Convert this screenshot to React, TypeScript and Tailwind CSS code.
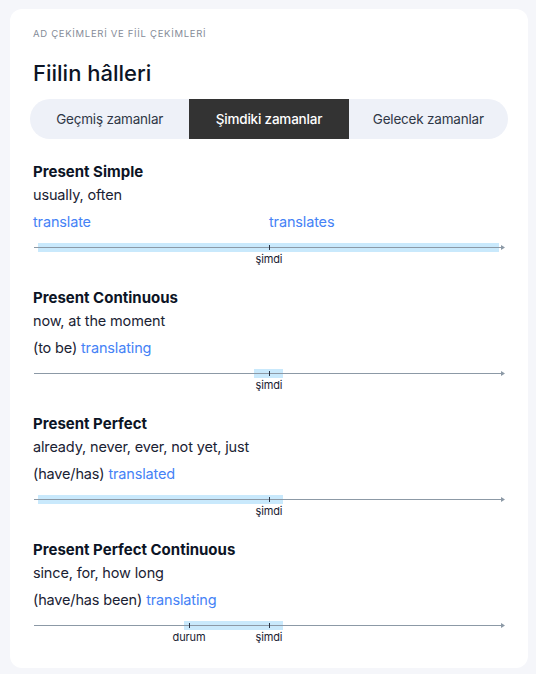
import React from "react";

type Mark = { label: string; pos: string };
type Tense = {
  title: string;
  hint: string;
  prefix?: string;
  forms: { text: string; left?: boolean }[];
  band: string;
  marks: Mark[];
};

const tenses: Tense[] = [
  {
    title: "Present Simple",
    hint: "usually, often",
    forms: [{ text: "translate" }, { text: "translates" }],
    band: "left-[4px] right-[6px]",
    marks: [{ label: "şimdi", pos: "left-[235px]" }],
  },
  {
    title: "Present Continuous",
    hint: "now, at the moment",
    prefix: "(to be)",
    forms: [{ text: "translating" }],
    band: "left-[220px] w-[29px]",
    marks: [{ label: "şimdi", pos: "left-[235px]" }],
  },
  {
    title: "Present Perfect",
    hint: "already, never, ever, not yet, just",
    prefix: "(have/has)",
    forms: [{ text: "translated" }],
    band: "left-[4px] w-[245px]",
    marks: [{ label: "şimdi", pos: "left-[235px]" }],
  },
  {
    title: "Present Perfect Continuous",
    hint: "since, for, how long",
    prefix: "(have/has been)",
    forms: [{ text: "translating" }],
    band: "left-[150px] w-[99px]",
    marks: [
      { label: "durum", pos: "left-[155px]" },
      { label: "şimdi", pos: "left-[235px]" },
    ],
  },
];

const tabs = ["Geçmiş zamanlar", "Şimdiki zamanlar", "Gelecek zamanlar"];

const Timeline = ({ t }: { t: Tense }) => (
  <div className="relative ml-[1px] mr-[3px] h-[52px]">
    {/* highlighted span */}
    <div className={`absolute top-[9px] h-[9px] bg-[#c9e9fc] ${t.band}`} />
    {/* axis */}
    <div className="absolute left-0 right-[2px] top-[13px] h-px bg-[#8c99a6]" />
    <svg className="absolute right-0 top-[11px]" width="4" height="5" viewBox="0 0 4 5">
      <path d="M0 0 L4 2.5 L0 5 Z" fill="#8c99a6" />
    </svg>
    {t.marks.map((m) => (
      <div key={m.label} className={`absolute top-0 ${m.pos}`}>
        <div className="absolute left-0 top-[11px] h-[5px] w-px bg-[#2b3545]" />
        <div className="absolute top-[18px] -translate-x-1/2 text-[11px] leading-[14px] text-[#1a2233] whitespace-nowrap">
          {m.label}
        </div>
      </div>
    ))}
  </div>
);

export default function App() {
  return (
    <div
      className="min-h-screen bg-[#f5f6fa] pl-[10px] pr-[8px] pt-[9px] pb-[8px]"
      style={{ fontFamily: "Inter, 'Open Sans', sans-serif" }}
    >
      <div className="rounded-[12px] bg-white px-[20px] pt-[18px] pb-[4px]">
        <div className="pl-[3px] text-[9.5px] leading-[14px] tracking-[0.7px] text-[#858b98] uppercase">
          AD ÇEKİMLERİ VE FİİL ÇEKİMLERİ
        </div>
        <h1 className="mt-[18px] pl-[3px] text-[22px] leading-[28px] font-medium text-[#0c1425]">
          Fiilin hâlleri
        </h1>
        <div className="mt-[12px] grid h-[40px] grid-cols-3 overflow-hidden rounded-full bg-[#eef1f8] text-[13.5px] tracking-[-0.2px]">
          {tabs.map((tab, i) => (
            <div
              key={tab}
              className={
                i === 1
                  ? "flex items-center justify-center bg-[#333333] font-medium text-white"
                  : "flex items-center justify-center text-[#2f3746]"
              }
            >
              {tab}
            </div>
          ))}
        </div>

        <div className="mt-[21px] flex flex-col text-[14.5px] tracking-[-0.15px]">
          {tenses.map((t) => (
            <div key={t.title} className="h-[126px] pl-[3px]">
              <div className="text-[15px] leading-[23px] font-bold tracking-normal text-[#0c1425]">{t.title}</div>
              <div className="leading-[23px] text-[#1a2233]">{t.hint}</div>
              <div className="mt-[3px] flex leading-[25px] text-[#1a2233]">
                {t.prefix ? (
                  <span>
                    {t.prefix} <span className="text-[#4582f6]">{t.forms[0].text}</span>
                  </span>
                ) : (
                  <>
                    <span className="w-[236px] text-[#4582f6]">{t.forms[0].text}</span>
                    <span className="text-[#4582f6]">{t.forms[1].text}</span>
                  </>
                )}
              </div>
              <Timeline t={t} />
            </div>
          ))}
        </div>
      </div>
    </div>
  );
}
